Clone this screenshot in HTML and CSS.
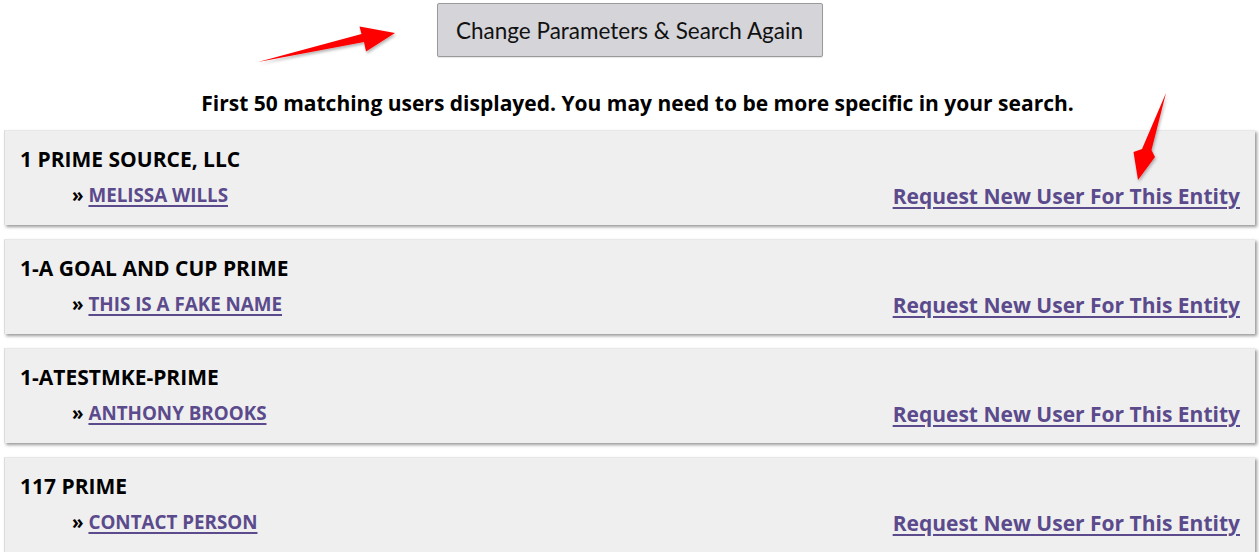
FILE: index.html
```html
<!DOCTYPE html>
<html>
<head>
<meta charset="utf-8">
<link rel="stylesheet" href="styles.css">
</head>
<body>
<div class="page">
  <div class="actions">
    <button class="btn">Change Parameters &amp; Search Again</button>
  </div>
  <p class="notice">First 50 matching users displayed. You may need to be more specific in your search.</p>
  <div class="list">
    <div class="card">
      <div class="entity">1 PRIME SOURCE, LLC</div>
      <div class="row">
        <div class="user"><span class="raquo">»</span> <a href="#">MELISSA WILLS</a></div>
        <a class="request" href="#">Request New User For This Entity</a>
      </div>
    </div>
    <div class="card">
      <div class="entity">1-A GOAL AND CUP PRIME</div>
      <div class="row">
        <div class="user"><span class="raquo">»</span> <a href="#">THIS IS A FAKE NAME</a></div>
        <a class="request" href="#">Request New User For This Entity</a>
      </div>
    </div>
    <div class="card">
      <div class="entity">1-ATESTMKE-PRIME</div>
      <div class="row">
        <div class="user"><span class="raquo">»</span> <a href="#">ANTHONY BROOKS</a></div>
        <a class="request" href="#">Request New User For This Entity</a>
      </div>
    </div>
    <div class="card">
      <div class="entity">117 PRIME</div>
      <div class="row">
        <div class="user"><span class="raquo">»</span> <a href="#">CONTACT PERSON</a></div>
        <a class="request" href="#">Request New User For This Entity</a>
      </div>
    </div>
  </div>
</div>
<svg class="annot" width="1259" height="553" viewBox="0 0 1259 553">
  <defs>
    <filter id="sh" x="-20%" y="-20%" width="140%" height="140%">
      <feDropShadow dx="1" dy="2" stdDeviation="1.5" flood-color="#000" flood-opacity="0.3"/>
    </filter>
  </defs>
  <polygon filter="url(#sh)" fill="#ff0000" points="258,62 361.5,34 359.5,26.5 395,33 366,51.5 364,42"/>
  <polygon filter="url(#sh)" fill="#ff0000" points="1166,93 1151.5,150 1155,157 1138,180 1133.5,152 1142,149"/>
</svg>
</body>
</html>
```

FILE: styles.css
```css
html, body {
  margin: 0;
  padding: 0;
  background: #ffffff;
}

body {
  font-family: "Open Sans", "Noto Sans", sans-serif;
  color: #000;
}

.page {
  padding: 0 4px;
}

.actions {
  display: flex;
  justify-content: center;
  padding-top: 3px;
}

.btn {
  font-family: "Lato", "Noto Sans", sans-serif;
  font-size: 22.5px;
  color: #111;
  background: #d5d4d9;
  border: 1px solid #9a9a9a;
  border-radius: 2px;
  width: 386px;
  height: 54px;
  padding: 0;
  box-shadow: 0 1px 1px rgba(0,0,0,0.1);
}

.notice {
  margin: 32px 0 0;
  padding-left: 16px;
  text-align: center;
  font-weight: 700;
  font-size: 21px;
  line-height: 28px;
}

.list {
  display: flex;
  flex-direction: column;
  gap: 14px;
  margin-top: 13px;
}

.card {
  background: #efefef;
  border-left: 1px solid #dcdcdc;
  border-top: 1px solid #e8e8e8;
  box-shadow: 2px 2px 3px rgba(0,0,0,0.4);
  padding: 14px 15px 15px 15px;
  height: 95px;
  box-sizing: border-box;
  display: flex;
  flex-direction: column;
}

.entity {
  font-weight: 700;
  font-size: 21px;
  line-height: 28px;
}

.row {
  margin-top: auto;
  display: flex;
  justify-content: space-between;
  align-items: baseline;
}

.user {
  margin-left: 52px;
  font-weight: 700;
  font-size: 18.8px;
  line-height: 24px;
  position: relative;
  top: -2px;
}

.user a,
.request {
  color: #5b4a8c;
  text-decoration: underline;
  text-decoration-thickness: 2px;
  text-underline-offset: 3px;
}

.request {
  font-weight: 700;
  font-size: 21px;
  line-height: 28px;
}

.annot {
  position: absolute;
  left: 0;
  top: 0;
  pointer-events: none;
}
```
